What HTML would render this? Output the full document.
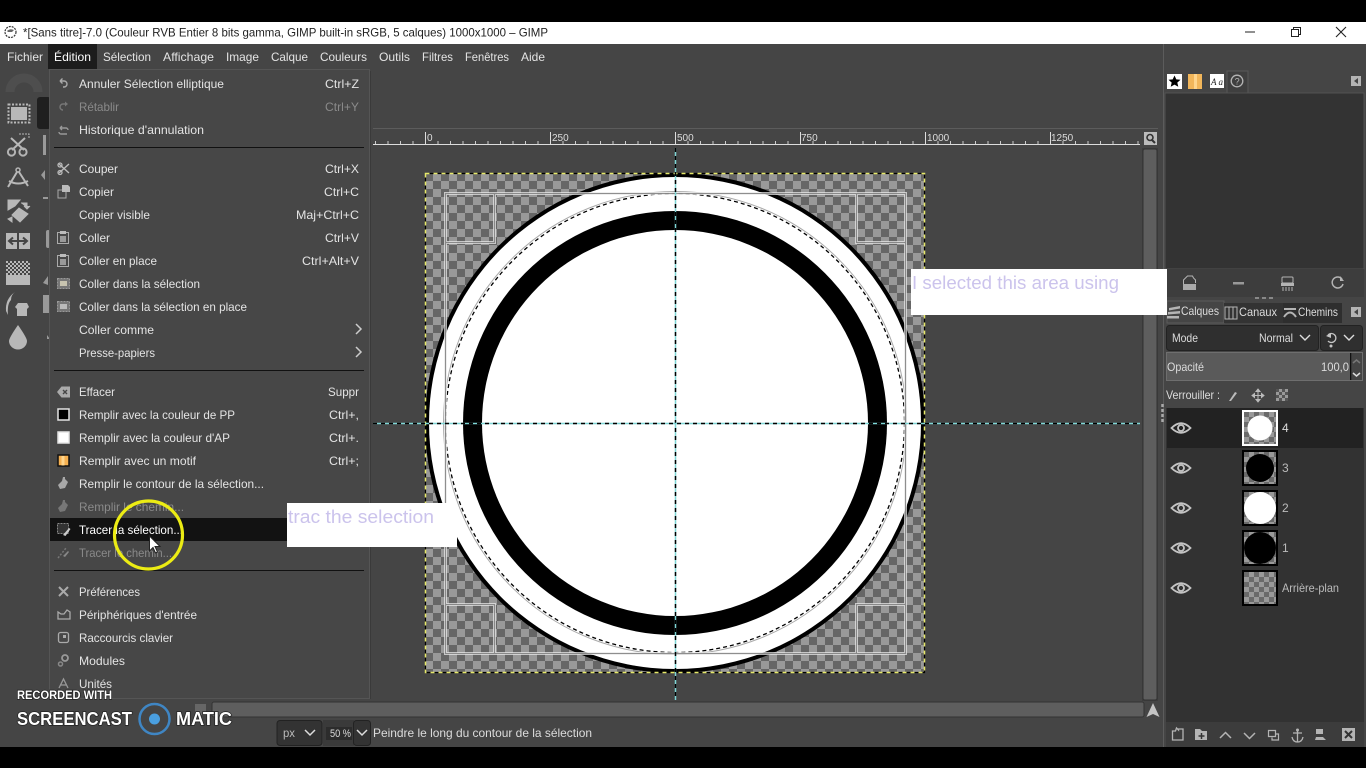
<!DOCTYPE html>
<html><head><meta charset="utf-8"><title>GIMP</title>
<style>
html,body{margin:0;padding:0;background:#000;width:1366px;height:768px;overflow:hidden}
svg{display:block}
text{font-family:"Liberation Sans",sans-serif;font-size:12px;fill:#dcdcdc}
.m text{fill:#e4e4e4}
.d text,text.d{fill:#8a8a8a}
.i{fill:none;stroke:#b4b4b4;stroke-width:1.5}
.f{fill:#b4b4b4}
</style></head><body>
<svg width="1366" height="768" viewBox="0 0 1366 768" xmlns="http://www.w3.org/2000/svg">
<defs>
<pattern id="ck" width="16" height="16" patternUnits="userSpaceOnUse" x="425" y="173"><rect width="16" height="16" fill="#999"/><rect width="8" height="8" fill="#666"/><rect x="8" y="8" width="8" height="8" fill="#666"/></pattern>
<pattern id="ck2" width="10" height="10" patternUnits="userSpaceOnUse" x="1244" y="412"><rect width="10" height="10" fill="#999"/><rect width="5" height="5" fill="#6a6a6a"/><rect x="5" y="5" width="5" height="5" fill="#6a6a6a"/></pattern>
<pattern id="dith" width="4" height="4" patternUnits="userSpaceOnUse" x="6" y="261"><rect width="2" height="2" fill="#b8b8b8"/><rect x="2" y="2" width="2" height="2" fill="#b8b8b8"/></pattern>
<pattern id="tk" width="12.5" height="12" patternUnits="userSpaceOnUse" x="425" y="133"><path d="M.5 8V11" stroke="#ccc" stroke-width="1"/></pattern>
<g id="eye"><path d="M-9.5 0Q0-9.5 9.5 0Q0 9.5-9.5 0Z" fill="none" stroke="#c4c4c4" stroke-width="1.800"/><circle r="3" fill="none" stroke="#c4c4c4" stroke-width="1.800"/></g>
</defs>
<rect width="1366" height="768" fill="#000"/>
<rect y="22" width="1366" height="22" fill="#fff"/>
<circle cx="10.500" cy="32" r="5.500" fill="#fff" stroke="#333" stroke-width="1.200" stroke-dasharray="2 1"/><path d="M7 31q3-3 7-1l-2 2H8z" fill="#666"/>
<text x="23" y="36.300" textLength="525" lengthAdjust="spacingAndGlyphs" style="fill:#222">*[Sans titre]-7.0 (Couleur RVB Entier 8 bits gamma, GIMP built-in sRGB, 5 calques) 1000x1000 – GIMP</text>
<path d="M1245 32h10" stroke="#222"/><path d="M1291.500 29.500h7v7h-7zM1293.500 29.500v-2h7v7h-2" fill="none" stroke="#222"/><path d="M1336 27l10 10M1346 27l-10 10" stroke="#222" stroke-width="1.100"/>
<rect y="44" width="1366" height="703" fill="#454545"/>

<!-- canvas area -->
<rect x="373" y="128" width="785" height="1" fill="#5c5c5c"/>
<rect x="373" y="133" width="767" height="12" fill="url(#tk)"/>
<rect x="373" y="144" width="767" height="1" fill="#ddd"/>
<path d="M425.500 132v12M550.500 132v12M675.500 132v12M800.500 132v12M925.500 132v12M1050.500 132v12" stroke="#ddd"/>
<text x="427" y="141" style="font-size:10px">0</text><text x="552" y="141" style="font-size:10px">250</text><text x="677" y="141" style="font-size:10px">500</text><text x="801" y="141" style="font-size:10px">750</text><text x="927" y="141" style="font-size:10px">1000</text><text x="1051" y="141" style="font-size:10px">1250</text>

<rect x="425" y="173" width="500" height="500" fill="url(#ck)"/>
<circle cx="675" cy="423" r="250" fill="#000"/>
<circle cx="675" cy="423" r="246" fill="#fff"/>
<circle cx="675" cy="423" r="212" fill="#000"/>
<circle cx="675" cy="423" r="193" fill="#fff"/>
<circle cx="675" cy="423" r="231.500" fill="none" stroke="#aaa" stroke-width="1"/>
<circle cx="675" cy="423" r="229.500" fill="none" stroke="#000" stroke-width="1.300" stroke-dasharray="4 3"/>
<g fill="none" stroke="#e8e8e8" stroke-width="3" opacity=".75">
<rect x="445.500" y="193.500" width="460" height="460"/>
<rect x="445.500" y="193.500" width="49" height="49"/><rect x="856.500" y="193.500" width="49" height="49"/>
<rect x="445.500" y="604.500" width="49" height="49"/><rect x="856.500" y="604.500" width="49" height="49"/>
</g>
<g fill="none" stroke="#7c7c7c" stroke-width="1" opacity=".85">
<rect x="445.500" y="193.500" width="460" height="460"/>
<rect x="445.500" y="193.500" width="49" height="49"/><rect x="856.500" y="193.500" width="49" height="49"/>
<rect x="445.500" y="604.500" width="49" height="49"/><rect x="856.500" y="604.500" width="49" height="49"/>
</g>
<rect x="425.500" y="173.500" width="499" height="499" fill="none" stroke="#000" stroke-width="1.200" stroke-dasharray="4 4" stroke-dashoffset="4"/>
<rect x="425.500" y="173.500" width="499" height="499" fill="none" stroke="#e6e86a" stroke-width="1.500" stroke-dasharray="4 4"/>
<path d="M675.500 148V700" stroke="#7fd6d6" stroke-width="1.500"/><path d="M675.500 148V700" stroke="#000" stroke-width="1.500" stroke-dasharray="4 4"/>
<path d="M373 423.500H1140" stroke="#7fd6d6" stroke-width="1.500"/><path d="M373 423.500H1140" stroke="#000" stroke-width="1.500" stroke-dasharray="4 4"/>

<!-- scrollbars -->
<rect x="1142" y="148" width="16" height="553" fill="#3c3c3c"/>
<rect x="1143" y="149" width="14" height="551" rx="2" fill="#5e5e5e" stroke="#333"/>
<rect x="1144" y="132" width="13" height="13" fill="#bbb"/><circle cx="1150" cy="137.500" r="3" fill="none" stroke="#333" stroke-width="1.600"/><path d="M1152 140l3 3" stroke="#333" stroke-width="2"/>
<rect x="212" y="702" width="932" height="15" rx="2" fill="#5e5e5e" stroke="#333"/>
<rect x="195" y="704" width="11" height="11" fill="#666"/>
<path d="M1153 703l6.500 14-6.500-3-6.500 3z" fill="#c4c4c4"/>

<!-- toolbox -->
<path d="M10 92a14 14 0 0 1 28 0" fill="none" stroke="#4e4e4e" stroke-width="9"/>
<rect x="37" y="97" width="14" height="32" rx="3" fill="#1f1f1f"/>
<rect x="11" y="107" width="16" height="13" fill="#b8b8b8"/>
<rect x="8.500" y="104.500" width="21" height="18" fill="none" stroke="#b8b8b8" stroke-width="2" stroke-dasharray="2 1.500"/>
<path d="M11 138l13 12M25 138l-13 12" stroke="#b8b8b8" stroke-width="2"/><circle cx="11.500" cy="152" r="3.600" class="i" style="stroke-width:2"/><circle cx="23" cy="152" r="3.600" class="i" style="stroke-width:2"/><path d="M19 134h10v4" fill="none" stroke="#b8b8b8" stroke-dasharray="2 1"/>
<circle cx="18" cy="170" r="2" class="i"/><path d="M17 172l-9 15M19 172l9 14M9 181q9 5 19 0" fill="none" stroke="#b8b8b8" stroke-width="2"/>
<path d="M8 200h12l-5 6-7 4zM19 208l9 6-8 8-8-7zM8 219l4 3v-5zM21 203h6v5M30 206l-3 3-3-3" fill="#b8b8b8" stroke="#b8b8b8"/>
<rect x="6" y="233" width="11" height="16" fill="#b8b8b8"/><rect x="19" y="233" width="11" height="16" fill="#b8b8b8"/><path d="M10 241h16M13 237.500l-4 3.500 4 3.500M23 237.500l4 3.500-4 3.500" fill="none" stroke="#454545" stroke-width="2"/>
<rect x="6" y="261" width="24" height="14" fill="url(#dith)"/><rect x="6" y="275" width="24" height="10" fill="#b8b8b8"/>
<path d="M15 292q-10 7-9 19l2 4q-1-11 3-15 0-5 4-8z" fill="#b8b8b8"/><path d="M18 303h9l2 4-2 2v7H17v-7l-2-2z" fill="#b8b8b8"/>
<path d="M18 325q-9 13-9 16a9 8.500 0 0 0 18 0q0-3-9-16z" fill="#b8b8b8"/>
<path d="M43 135h3v20h-3z M45 170l-4 5 4 5z M43 197h5v2h-5zM46 232a2 2 0 0 1 4 0v14a2 2 0 0 1-4 0zM43 283l5-7v9zM43 295h7v18h-7zM47 335l3 4h-3z" fill="#999"/>

<!-- right dock -->
<rect x="1163" y="70" width="203" height="677" fill="#454545"/>
<rect x="1163" y="44" width="1" height="703" fill="#5c5c5c"/>
<rect x="1227" y="71" width="21" height="22" fill="#3f3f3f" stroke="#585858"/>
<rect x="1167" y="74" width="15" height="15" fill="#fff"/><path d="M1174.500 75.500l1.800 3.900 4.200.4-3.200 2.800 1 4.200-3.800-2.200-3.800 2.200 1-4.200-3.200-2.800 4.200-.4z" fill="#000"/>
<rect x="1188" y="74" width="14" height="15" fill="#f2b65a"/><rect x="1194" y="74" width="3" height="15" fill="#ffd58c"/>
<rect x="1210" y="74" width="14" height="14" fill="#fff"/><text x="1211" y="85" style="font-size:9px;font-style:italic;font-family:'Liberation Serif',serif;fill:#222" textLength="12">Aa</text>
<circle cx="1237" cy="81" r="5.800" fill="none" stroke="#b4b4b4" stroke-width="1.300"/><text x="1234.600" y="84.500" style="font-size:9px;fill:#b4b4b4">?</text>
<rect x="1351" y="76" width="10" height="10" fill="#b4b4b4"/><path d="M1358 78v6l-4-3z" fill="#454545"/>
<rect x="1165" y="93" width="199" height="176" fill="#333" stroke="#525252"/>
<rect x="1167" y="269" width="197" height="28" fill="#3d3d3d"/>
<path d="M1183.500 288v-8l4-4h5l1 2 2 2v3" fill="none" stroke="#b4b4b4"/><rect x="1183" y="284" width="13" height="6" fill="#aaa"/>
<rect x="1233" y="282" width="11" height="2.500" fill="#999"/>
<rect x="1282" y="277" width="11" height="6" rx="1" fill="none" stroke="#b4b4b4"/><rect x="1281" y="283" width="13" height="3" fill="#b4b4b4"/><path d="M1283 287v4M1286 287v4M1289 287v4M1292 287v4" stroke="#b4b4b4"/>
<path d="M1342 279a5.500 5.500 0 1 0 1 5" fill="none" stroke="#b4b4b4" stroke-width="1.500"/><path d="M1340 276v5h4z" fill="#b4b4b4"/>
<path d="M1255 298h4M1262 298h4M1269 298h4" stroke="#888" stroke-width="2"/>

<!-- tabs -->
<rect x="1167" y="301" width="57" height="22" fill="#454545" stroke="#5c5c5c"/>
<rect x="1224" y="303" width="59" height="20" fill="#333"/><rect x="1283" y="303" width="59" height="20" fill="#2e2e2e"/>
<path d="M1169 308l11-2v2.500l-11 2zM1168 312l12-1v2.500l-12 1zM1167 316h12v2.500h-12z" fill="#b4b4b4"/>
<text x="1181" y="315" textLength="38" lengthAdjust="spacingAndGlyphs">Calques</text>
<rect x="1225" y="307" width="12" height="12" fill="none" stroke="#b4b4b4"/><path d="M1229 307v12M1233 307v12" stroke="#b4b4b4"/>
<text x="1239" y="316" textLength="38" lengthAdjust="spacingAndGlyphs">Canaux</text>
<path d="M1284 309l12 0M1284 317q6-9 12 0" fill="none" stroke="#b4b4b4" stroke-width="2"/>
<text x="1298" y="316" textLength="40" lengthAdjust="spacingAndGlyphs">Chemins</text>
<rect x="1351" y="307" width="10" height="10" fill="#b4b4b4"/><path d="M1358 309v6l-4-3z" fill="#454545"/>

<!-- mode -->
<rect x="1166.500" y="325.500" width="152" height="25" rx="3" fill="#2f2f2f" stroke="#222"/>
<text x="1172" y="342" textLength="26" lengthAdjust="spacingAndGlyphs">Mode</text>
<text x="1259" y="342" textLength="34" lengthAdjust="spacingAndGlyphs">Normal</text>
<path d="M1300 335l5 5 5-5" fill="none" stroke="#ddd" stroke-width="1.400"/>
<rect x="1320.500" y="325.500" width="42" height="25" rx="3" fill="#2f2f2f" stroke="#222"/>
<path d="M1328 335a4.500 4.500 0 1 1 0 6" fill="none" stroke="#c4c4c4" stroke-width="1.300"/><path d="M1326 336l5-3v5z" fill="#c4c4c4"/><circle cx="1331" cy="346" r="1.500" fill="#c4c4c4"/>
<path d="M1344 335l5 5 5-5" fill="none" stroke="#ddd" stroke-width="1.400"/>
<rect x="1166.500" y="352.500" width="196" height="28" fill="#5a5a5a" stroke="#6e6e6e"/>
<rect x="1350" y="353" width="1.500" height="27" fill="#111"/><rect x="1352" y="353" width="10" height="27" fill="#444"/>
<text x="1167" y="371" textLength="37" lengthAdjust="spacingAndGlyphs">Opacité</text>
<text x="1321" y="371" textLength="28" lengthAdjust="spacingAndGlyphs">100,0</text>
<path d="M1353 363l3.500-3 3.500 3" fill="none" stroke="#777" stroke-width="1.500"/><path d="M1353 373l3.500 3 3.500-3" fill="none" stroke="#ddd" stroke-width="1.500"/>
<text x="1166" y="399" textLength="54" lengthAdjust="spacingAndGlyphs">Verrouiller :</text>
<path d="M1229 401l6-9 2 1-6 8z" fill="#bbb"/>
<path d="M1258 389v13M1252 395.500h12M1258 389l-2 2.500h4zM1258 402l-2-2.500h4zM1252 395.500l2.500-2v4zM1264 395.500l-2.500-2v4z" fill="#bbb" stroke="#bbb"/>
<rect x="1276" y="389" width="12" height="12" fill="#999"/><path d="M1276 389h3v3h-3zM1282 389h3v3h-3zM1279 392h3v3h-3zM1285 392h3v3h-3zM1276 395h3v3h-3zM1282 395h3v3h-3zM1279 398h3v3h-3zM1285 398h3v3h-3z" fill="#555"/>
<path d="M1162.500 404v20" stroke="#aaa" stroke-width="2.500" stroke-dasharray="3 2"/>

<!-- layers -->
<rect x="1166" y="408" width="198" height="314" fill="#323232"/>
<rect x="1167" y="408" width="196" height="40" fill="#222"/>
<use href="#eye" x="1181" y="428"/><use href="#eye" x="1181" y="468"/><use href="#eye" x="1181" y="508"/><use href="#eye" x="1181" y="548"/><use href="#eye" x="1181" y="588"/>
<rect x="1243" y="411" width="34" height="34" fill="url(#ck2)" stroke="#fff" stroke-width="2"/><circle cx="1260" cy="428" r="12.500" fill="#fff"/>
<rect x="1243" y="451" width="34" height="34" fill="url(#ck2)" stroke="#000" stroke-width="2"/><circle cx="1260" cy="468" r="14" fill="#000"/>
<rect x="1243" y="491" width="34" height="34" fill="url(#ck2)" stroke="#000" stroke-width="2"/><circle cx="1260" cy="508" r="16" fill="#fff"/>
<rect x="1243" y="531" width="34" height="34" fill="url(#ck2)" stroke="#000" stroke-width="2"/><circle cx="1260" cy="548" r="16" fill="#000"/>
<rect x="1243" y="571" width="34" height="34" fill="url(#ck2)" stroke="#000" stroke-width="2"/>
<text x="1282" y="432">4</text><text x="1282" y="472" style="fill:#bbb">3</text><text x="1282" y="512" style="fill:#bbb">2</text><text x="1282" y="552" style="fill:#bbb">1</text>
<text x="1282" y="592" textLength="57" lengthAdjust="spacingAndGlyphs" style="fill:#bbb">Arrière-plan</text>
<rect x="1166" y="722" width="198" height="25" fill="#3c3c3c"/>
<path d="M1172.500 740v-9h3l1-3 2 2v-1h4.500v11z" fill="none" stroke="#b4b4b4" stroke-width="1.300"/>
<path d="M1195 740v-11h5l2 2h5v9z" fill="#b4b4b4"/><path d="M1201.500 733v6M1198.500 736h6" stroke="#333" stroke-width="1.500"/>
<path d="M1220 738l5.500-5.500 5.500 5.500" fill="none" stroke="#b4b4b4" stroke-width="1.500"/><path d="M1244 733l5.500 5.500 5.500-5.500" fill="none" stroke="#b4b4b4" stroke-width="1.500"/>
<path d="M1268.500 730.500h7v6h-7zM1272 737.500v2.500h6.500v-6h-3" fill="none" stroke="#b4b4b4" stroke-width="1.200"/>
<path d="M1297.500 729v13M1293 733h9M1292 737q1 5 5.500 5t5.500-5" fill="none" stroke="#b4b4b4" stroke-width="1.300"/><circle cx="1297.500" cy="730" r="1.500" fill="#b4b4b4"/>
<path d="M1316 729h7v5h-7zM1316 737h7l3 3h-11z" fill="#b4b4b4"/><rect x="1342" y="728" width="13" height="13" fill="#b4b4b4"/><path d="M1345 731l7 7M1352 731l-7 7" stroke="#333" stroke-width="2"/>

<!-- status bar -->
<rect x="277" y="720.500" width="45" height="25" rx="3" fill="#333" stroke="#222"/>
<text x="283" y="737" textLength="12" lengthAdjust="spacingAndGlyphs" style="fill:#bbb">px</text>
<path d="M305 730l5 5 5-5" fill="none" stroke="#ddd" stroke-width="1.500"/>
<rect x="323" y="720" width="31" height="26" fill="#3a3a3a"/><rect x="326" y="727" width="26" height="13" fill="#2c2c2c"/>
<text x="330" y="737" textLength="21" lengthAdjust="spacingAndGlyphs" style="font-size:11px">50 %</text>
<rect x="353.500" y="720.500" width="17" height="25" rx="3" fill="#333" stroke="#222"/>
<path d="M357 730l5 5 5-5" fill="none" stroke="#ddd" stroke-width="1.500"/>
<text x="373" y="737" textLength="219" lengthAdjust="spacingAndGlyphs">Peindre le long du contour de la sélection</text>

<!-- menu bar -->
<rect x="48" y="44" width="49" height="25" fill="#1c1c1c"/>
<g class="m">
<text x="7" y="61" textLength="36" lengthAdjust="spacingAndGlyphs">Fichier</text>
<text x="54" y="61" textLength="37" lengthAdjust="spacingAndGlyphs" style="fill:#fff">Édition</text>
<text x="103" y="61" textLength="48" lengthAdjust="spacingAndGlyphs">Sélection</text>
<text x="163" y="61" textLength="51" lengthAdjust="spacingAndGlyphs">Affichage</text>
<text x="226" y="61" textLength="33" lengthAdjust="spacingAndGlyphs">Image</text>
<text x="271" y="61" textLength="37" lengthAdjust="spacingAndGlyphs">Calque</text>
<text x="320" y="61" textLength="47" lengthAdjust="spacingAndGlyphs">Couleurs</text>
<text x="379" y="61" textLength="31" lengthAdjust="spacingAndGlyphs">Outils</text>
<text x="422" y="61" textLength="31" lengthAdjust="spacingAndGlyphs">Filtres</text>
<text x="465" y="61" textLength="44" lengthAdjust="spacingAndGlyphs">Fenêtres</text>
<text x="521" y="61" textLength="24" lengthAdjust="spacingAndGlyphs">Aide</text>
</g>

<!-- edit menu -->
<rect x="49.500" y="69.500" width="320" height="629" fill="#474747" stroke="#555"/>
<rect x="370" y="71" width="1" height="628" fill="#3a3a3a"/>
<rect x="54" y="147" width="310" height="1" fill="#111"/>
<rect x="54" y="370" width="310" height="1" fill="#111"/>
<rect x="54" y="570" width="310" height="1" fill="#111"/>
<rect x="50" y="518" width="240" height="23" fill="#121212"/>
<g class="m">
<text x="79" y="88" textLength="145" lengthAdjust="spacingAndGlyphs">Annuler Sélection elliptique</text>
<text x="79" y="134" textLength="125" lengthAdjust="spacingAndGlyphs">Historique d'annulation</text>
<text x="79" y="173" textLength="39" lengthAdjust="spacingAndGlyphs">Couper</text>
<text x="79" y="196" textLength="35" lengthAdjust="spacingAndGlyphs">Copier</text>
<text x="79" y="219" textLength="71" lengthAdjust="spacingAndGlyphs">Copier visible</text>
<text x="79" y="242" textLength="31" lengthAdjust="spacingAndGlyphs">Coller</text>
<text x="79" y="265" textLength="78" lengthAdjust="spacingAndGlyphs">Coller en place</text>
<text x="79" y="288" textLength="121" lengthAdjust="spacingAndGlyphs">Coller dans la sélection</text>
<text x="79" y="311" textLength="168" lengthAdjust="spacingAndGlyphs">Coller dans la sélection en place</text>
<text x="79" y="334" textLength="75" lengthAdjust="spacingAndGlyphs">Coller comme</text>
<text x="79" y="357" textLength="76" lengthAdjust="spacingAndGlyphs">Presse-papiers</text>
<text x="79" y="396" textLength="36" lengthAdjust="spacingAndGlyphs">Effacer</text>
<text x="79" y="419" textLength="156" lengthAdjust="spacingAndGlyphs">Remplir avec la couleur de PP</text>
<text x="79" y="442" textLength="151" lengthAdjust="spacingAndGlyphs">Remplir avec la couleur d'AP</text>
<text x="79" y="465" textLength="117" lengthAdjust="spacingAndGlyphs">Remplir avec un motif</text>
<text x="79" y="488" textLength="185" lengthAdjust="spacingAndGlyphs">Remplir le contour de la sélection...</text>
<text x="79" y="534" textLength="104" lengthAdjust="spacingAndGlyphs" style="fill:#fff">Tracer la sélection...</text>
<text x="79" y="596" textLength="61" lengthAdjust="spacingAndGlyphs">Préférences</text>
<text x="79" y="619" textLength="118" lengthAdjust="spacingAndGlyphs">Périphériques d'entrée</text>
<text x="79" y="642" textLength="94" lengthAdjust="spacingAndGlyphs">Raccourcis clavier</text>
<text x="79" y="665" textLength="46" lengthAdjust="spacingAndGlyphs">Modules</text>
<text x="79" y="688" textLength="33" lengthAdjust="spacingAndGlyphs">Unités</text>
<text x="325" y="88" textLength="34" lengthAdjust="spacingAndGlyphs">Ctrl+Z</text>
<text x="325" y="173" textLength="34" lengthAdjust="spacingAndGlyphs">Ctrl+X</text>
<text x="324" y="196" textLength="35" lengthAdjust="spacingAndGlyphs">Ctrl+C</text>
<text x="296" y="219" textLength="63" lengthAdjust="spacingAndGlyphs">Maj+Ctrl+C</text>
<text x="325" y="242" textLength="34" lengthAdjust="spacingAndGlyphs">Ctrl+V</text>
<text x="302" y="265" textLength="57" lengthAdjust="spacingAndGlyphs">Ctrl+Alt+V</text>
<text x="328" y="396" textLength="31" lengthAdjust="spacingAndGlyphs">Suppr</text>
<text x="329" y="419" textLength="30" lengthAdjust="spacingAndGlyphs">Ctrl+,</text>
<text x="329" y="442" textLength="30" lengthAdjust="spacingAndGlyphs">Ctrl+.</text>
<text x="329" y="465" textLength="30" lengthAdjust="spacingAndGlyphs">Ctrl+;</text>
</g>
<g class="d">
<text x="79" y="111" textLength="40" lengthAdjust="spacingAndGlyphs">Rétablir</text>
<text x="325" y="111" textLength="34" lengthAdjust="spacingAndGlyphs">Ctrl+Y</text>
<text x="79" y="511" textLength="105" lengthAdjust="spacingAndGlyphs">Remplir le chemin...</text>
<text x="79" y="557" textLength="93" lengthAdjust="spacingAndGlyphs">Tracer le chemin...</text>
</g>
<path d="M356 324l5 5-5 5M356 347l5 5-5 5" fill="none" stroke="#ccc" stroke-width="1.500"/>
<!-- menu icons -->
<path d="M60 81h4a3 3 0 0 1 0 6h-1M60 81l2.500-2.500M60 81l2.500 2.500" fill="none" stroke="#aaa" stroke-width="1.400"/>
<path d="M67 104h-4a3 3 0 0 0 0 6" fill="none" stroke="#777" stroke-width="1.400"/><path d="M65 101.500l3 2.500-3 2.500z" fill="#777"/>
<path d="M60 128h6a2 2 0 0 1 2 2M67 134h-6a2 2 0 0 1-2-2M60 128l2-2M60 128l2 2" fill="none" stroke="#999" stroke-width="1.400"/>
<path d="M59 164l10 9M59 173l10-9" stroke="#bbb" stroke-width="1.400"/><circle cx="60" cy="165" r="2" fill="none" stroke="#bbb" stroke-width="1.300"/><circle cx="60" cy="172.500" r="2" fill="none" stroke="#bbb" stroke-width="1.300"/>
<rect x="58" y="190" width="8" height="8" fill="none" stroke="#aaa"/><path d="M62 185h6l2 2v5h-8z" fill="#bbb"/>
<g fill="none" stroke="#aaa"><rect x="57.500" y="232.500" width="11" height="11"/><rect x="57.500" y="255.500" width="11" height="11"/></g><rect x="60" y="236" width="6" height="6" fill="#999"/><rect x="60" y="259" width="6" height="6" fill="#999"/><rect x="60" y="231" width="6" height="3" fill="#bbb"/><rect x="60" y="254" width="6" height="3" fill="#bbb"/>
<rect x="57.500" y="278.500" width="12" height="10" fill="#777" stroke="#999" stroke-dasharray="2 1"/><rect x="60" y="281" width="7" height="5" fill="#c8c4b0"/>
<rect x="57.500" y="301.500" width="12" height="10" fill="#777" stroke="#999" stroke-dasharray="2 1"/><rect x="60" y="304" width="7" height="5" fill="#bbb"/>
<path d="M57 392l4.500-5.500H70v11h-8.500z" fill="#aaa"/><path d="M63 390l4 4M67 390l-4 4" stroke="#474747" stroke-width="1.400"/>
<rect x="58" y="409" width="11" height="11" fill="#000" stroke="#e4e4e4" stroke-width="1.500"/>
<rect x="58" y="432" width="11" height="11" fill="#fff" stroke="#e4e4e4" stroke-width="1.500"/>
<rect x="58" y="455" width="11" height="11" fill="#f5b050" stroke="#111" stroke-width="1.500"/><rect x="61.500" y="456" width="3" height="9.500" fill="#ffd58c"/>
<path d="M58 485l4-4 1-4 2 0 0 2 3 3-3 6-5 1z" fill="#a8a8a8"/>
<path d="M58 508l4-4 1-4 2 0 0 2 3 3-3 6-5 1z" fill="#777"/>
<rect x="57.500" y="523.500" width="11" height="10" fill="#333" stroke="#888" stroke-dasharray="2 1"/><path d="M63 535l6-7 1.500 1-5 7z" fill="#ccc"/>
<path d="M58 558l8-10" stroke="#777" stroke-width="1.500" stroke-dasharray="2 1.500"/><path d="M63 556l5-5 1 1-4 5z" fill="#888"/>
<path d="M59 587l9 9M68 587l-9 9" stroke="#aaa" stroke-width="2"/>
<path d="M58 619v-7l3 2h3l3-4 3 2v7z" fill="none" stroke="#aaa" stroke-width="1.300"/>
<rect x="58.500" y="632.500" width="10" height="10" rx="2" fill="none" stroke="#aaa" stroke-width="1.300"/><rect x="63" y="635" width="3" height="3" fill="#aaa"/>
<circle cx="65" cy="658" r="3" fill="none" stroke="#999" stroke-width="1.800"/><circle cx="60.500" cy="664" r="2" fill="none" stroke="#888" stroke-width="1.500"/>
<path d="M59 688l4.500-9 4.500 9M60.500 685h6" fill="none" stroke="#999" stroke-width="1.300"/>

<!-- annotation boxes -->
<rect x="287" y="503" width="170" height="44" fill="#fff"/>
<text x="288" y="523" textLength="146" lengthAdjust="spacingAndGlyphs" style="font-size:18px;fill:#cbc3ec">trac the selection</text>
<rect x="911" y="269" width="256" height="46" fill="#fff"/>
<text x="912" y="289" textLength="207" lengthAdjust="spacingAndGlyphs" style="font-size:18px;fill:#cbc3ec">I selected this area using</text>

<!-- cursor highlight -->
<circle cx="148.500" cy="535" r="34" fill="none" stroke="#ecec14" stroke-width="3.200"/>
<path d="M149.500 536v15l3.500-3.500 2.500 5.500 2-1-2.500-5.500h5z" fill="#fff" stroke="#222" stroke-width="1"/>

<!-- watermark -->
<text x="17" y="699" textLength="95" lengthAdjust="spacingAndGlyphs" style="font-size:12px;font-weight:bold;fill:#fff;stroke:#222;stroke-width:1.500px;paint-order:stroke">RECORDED WITH</text>
<text x="17" y="725" textLength="115" lengthAdjust="spacingAndGlyphs" style="font-size:18px;font-weight:bold;fill:#fff;stroke:#222;stroke-width:1.500px;paint-order:stroke">SCREENCAST</text>
<text x="176" y="725" textLength="56" lengthAdjust="spacingAndGlyphs" style="font-size:18px;font-weight:bold;fill:#fff;stroke:#222;stroke-width:1.500px;paint-order:stroke">MATIC</text>
<circle cx="154.500" cy="719" r="15" fill="none" stroke="#3f86c4" stroke-width="2.500"/>
<circle cx="154.500" cy="719" r="5.500" fill="#4a9fe0"/>
<rect y="747" width="1366" height="21" fill="#000"/>
</svg>
</body></html>
